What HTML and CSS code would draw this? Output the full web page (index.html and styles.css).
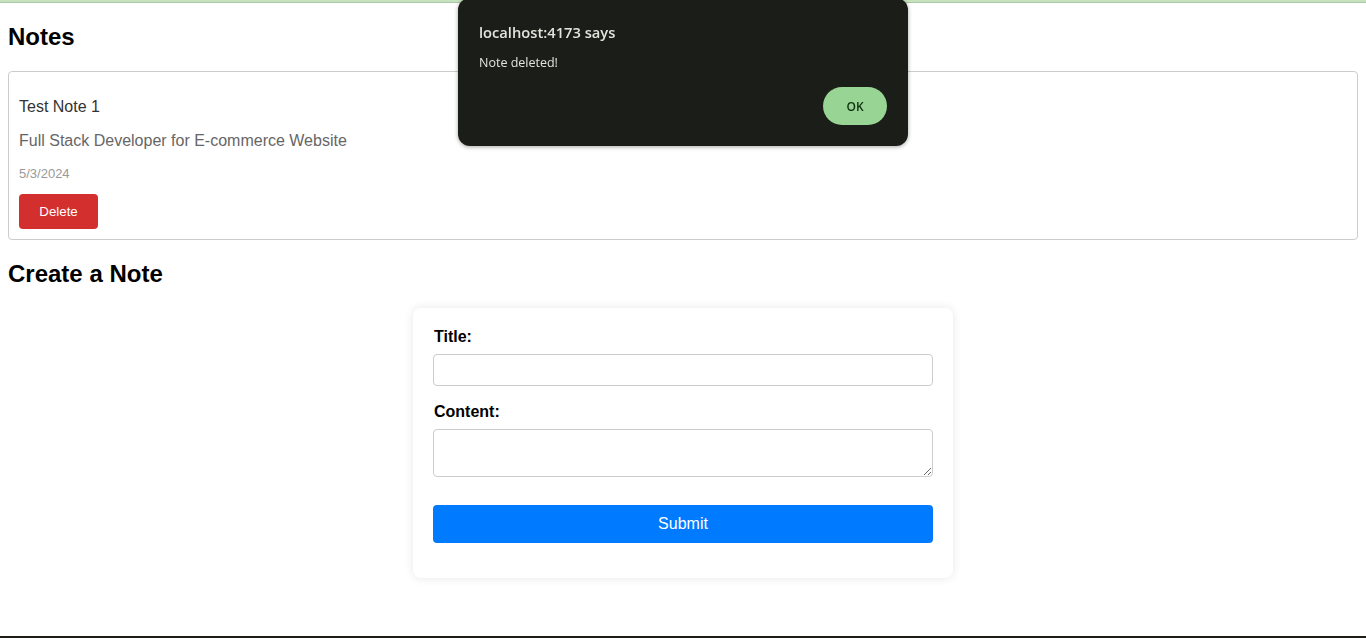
FILE: index.html
```html
<!DOCTYPE html>
<html lang="en">
<head>
<meta charset="utf-8">
<title>Notes</title>
<link rel="stylesheet" href="styles.css">
</head>
<body>
<div class="topbar"></div>
<h2 class="heading heading-top">Notes</h2>
<div class="note-list">
  <div class="note">
    <p class="note-title">Test Note 1</p>
    <p class="note-content">Full Stack Developer for E-commerce Website</p>
    <p class="note-date">5/3/2024</p>
    <button class="delete-btn">Delete</button>
  </div>
</div>
<h2 class="heading heading-create">Create a Note</h2>
<form class="note-form">
  <label class="field-label" for="title">Title:</label>
  <input class="field-input" id="title" type="text">
  <label class="field-label" for="content">Content:</label>
  <textarea class="field-textarea" id="content"></textarea>
  <button class="submit-btn" type="button">Submit</button>
</form>
<div class="bottombar"></div>
<div class="dialog">
  <div class="dialog-title">localhost:4173 says</div>
  <div class="dialog-msg">Note deleted!</div>
  <div class="dialog-actions"><button class="dialog-ok">OK</button></div>
</div>
</body>
</html>
```
FILE: styles.css
```css
html, body { height: 100%; }
body {
  margin: 0;
  padding: 0 8px;
  font-family: "Liberation Sans", Arial, sans-serif;
  background: #fff;
  color: #000;
  box-sizing: border-box;
  overflow: hidden;
}
.topbar {
  position: fixed;
  top: 0; left: 0; right: 0;
  height: 2px;
  background: #c6e2bf;
  border-bottom: 1px solid #a9c9a2;
}
.bottombar {
  position: fixed;
  bottom: 0; left: 0; right: 0;
  height: 2px;
  background: #201d17;
}
.heading {
  font-size: 24px;
  font-weight: bold;
  margin: 20px 0;
  line-height: 27px;
}
.heading-top { margin: 23px 0 0; }
.heading-create { margin: 20px 0 21px; }
.note-list { margin-top: 21px; }
.note {
  border: 1px solid #ccc;
  border-radius: 4px;
  padding: 10px;
  display: flex;
  flex-direction: column;
  align-items: flex-start;
}
.note p { margin: 0; }
.note-title {
  font-size: 16px;
  line-height: 18px;
  color: #333;
  margin-top: 16px !important;
}
.note-content {
  font-size: 16px;
  line-height: 18px;
  color: #666;
  margin-top: 16px !important;
}
.note-date {
  font-size: 13px;
  line-height: 15px;
  color: #999;
  margin-top: 16px !important;
}
.delete-btn {
  margin-top: 13px;
  background: #d32f2f;
  color: #fff;
  border: none;
  border-radius: 4px;
  width: 79px;
  height: 35px;
  font-family: "Liberation Sans", Arial, sans-serif;
  font-size: 13.3px;
  padding: 0;
}
.note-form {
  width: 500px;
  margin: 0 auto;
  padding: 20px 20px 35px;
  border-radius: 8px;
  box-shadow: 0 0 10px rgba(0,0,0,0.1);
  display: flex;
  flex-direction: column;
}
.field-label {
  font-size: 16px;
  font-weight: bold;
  line-height: 18px;
  margin-bottom: 8px;
  padding-left: 1px;
}
.field-input {
  height: 32px;
  box-sizing: border-box;
  border: 1px solid #ccc;
  border-radius: 4px;
  margin: 0 0 17px;
  font-size: 14px;
  padding: 8px;
}
.field-textarea {
  height: 48px;
  box-sizing: border-box;
  border: 1px solid #ccc;
  border-radius: 4px;
  margin: 0 0 28px;
  font-size: 14px;
  padding: 8px;
  resize: vertical;
}
.submit-btn {
  height: 38px;
  background: #007bff;
  color: #fff;
  border: none;
  border-radius: 4px;
  font-family: "Liberation Sans", Arial, sans-serif;
  font-size: 16px;
}
.dialog {
  position: fixed;
  top: -2px;
  left: 458px;
  width: 450px;
  height: 148px;
  box-sizing: border-box;
  background: #1a1d18;
  border-radius: 12px;
  box-shadow: 0 1px 4px rgba(0,0,0,0.35);
  padding: 24px 21px 0 21px;
  font-family: "Open Sans", "Noto Sans", sans-serif;
  color: #e3e4dc;
}
.dialog-title {
  font-size: 14.7px;
  font-weight: 600;
  line-height: 20px;
}
.dialog-msg {
  font-size: 12.5px;
  line-height: 16px;
  margin-top: 13px;
}
.dialog-actions {
  display: flex;
  justify-content: flex-end;
  margin-top: 16px;
}
.dialog-ok {
  width: 64px;
  height: 38px;
  border: none;
  border-radius: 19px;
  background: #98d494;
  color: #10310f;
  font-family: "Open Sans", "Noto Sans", sans-serif;
  font-size: 12px;
  font-weight: 600;
}
```
